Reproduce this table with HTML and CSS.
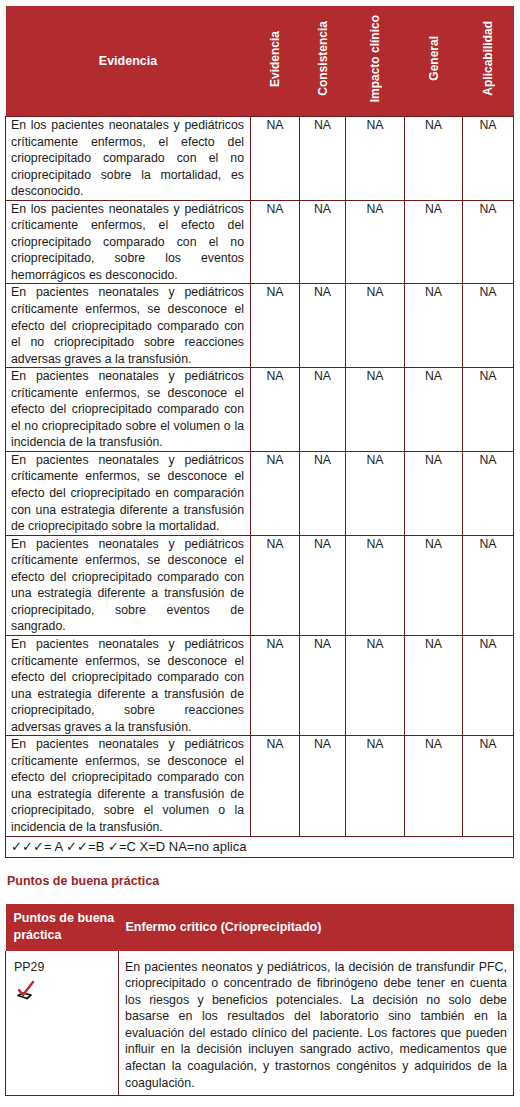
FILE: index.html
```html
<!DOCTYPE html>
<html lang="es">
<head>
<meta charset="utf-8">
<link rel="stylesheet" href="styles.css">
</head>
<body>
<div class="page">
  <table class="ev">
    <colgroup>
      <col class="c-main"><col class="c1"><col class="c2"><col class="c3"><col class="c4"><col class="c5">
    </colgroup>
    <thead>
      <tr>
        <th class="h-main">Evidencia</th>
        <th class="h-vert"><span>Evidencia</span></th>
        <th class="h-vert"><span>Consistencia</span></th>
        <th class="h-vert"><span>Impacto clínico</span></th>
        <th class="h-vert"><span>General</span></th>
        <th class="h-vert"><span>Aplicabilidad</span></th>
      </tr>
    </thead>
    <tbody>
      <tr>
        <td class="txt">En los pacientes neonatales y pediátricos críticamente enfermos, el efecto del crioprecipitado comparado con el no crioprecipitado sobre la mortalidad, es desconocido.</td>
        <td class="na">NA</td><td class="na">NA</td><td class="na">NA</td><td class="na">NA</td><td class="na">NA</td>
      </tr>
      <tr>
        <td class="txt">En los pacientes neonatales y pediátricos críticamente enfermos, el efecto del crioprecipitado comparado con el no crioprecipitado, sobre los eventos hemorrágicos es desconocido.</td>
        <td class="na">NA</td><td class="na">NA</td><td class="na">NA</td><td class="na">NA</td><td class="na">NA</td>
      </tr>
      <tr>
        <td class="txt">En pacientes neonatales y pediátricos críticamente enfermos, se desconoce el efecto del crioprecipitado comparado con el no crioprecipitado sobre reacciones adversas graves a la transfusión.</td>
        <td class="na">NA</td><td class="na">NA</td><td class="na">NA</td><td class="na">NA</td><td class="na">NA</td>
      </tr>
      <tr>
        <td class="txt">En pacientes neonatales y pediátricos críticamente enfermos, se desconoce el efecto del crioprecipitado comparado con el no crioprecipitado sobre el volumen o la incidencia de la transfusión.</td>
        <td class="na">NA</td><td class="na">NA</td><td class="na">NA</td><td class="na">NA</td><td class="na">NA</td>
      </tr>
      <tr>
        <td class="txt">En pacientes neonatales y pediátricos críticamente enfermos, se desconoce el efecto del crioprecipitado en comparación con una estrategia diferente a transfusión de crioprecipitado sobre la mortalidad.</td>
        <td class="na">NA</td><td class="na">NA</td><td class="na">NA</td><td class="na">NA</td><td class="na">NA</td>
      </tr>
      <tr>
        <td class="txt">En pacientes neonatales y pediátricos críticamente enfermos, se desconoce el efecto del crioprecipitado comparado con una estrategia diferente a transfusión de crioprecipitado, sobre eventos de sangrado.</td>
        <td class="na">NA</td><td class="na">NA</td><td class="na">NA</td><td class="na">NA</td><td class="na">NA</td>
      </tr>
      <tr>
        <td class="txt">En pacientes neonatales y pediátricos críticamente enfermos, se desconoce el efecto del crioprecipitado comparado con una estrategia diferente a transfusión de crioprecipitado, sobre reacciones adversas graves a la transfusión.</td>
        <td class="na">NA</td><td class="na">NA</td><td class="na">NA</td><td class="na">NA</td><td class="na">NA</td>
      </tr>
      <tr>
        <td class="txt">En pacientes neonatales y pediátricos críticamente enfermos, se desconoce el efecto del crioprecipitado comparado con una estrategia diferente a transfusión de crioprecipitado, sobre el volumen o la incidencia de la transfusión.</td>
        <td class="na">NA</td><td class="na">NA</td><td class="na">NA</td><td class="na">NA</td><td class="na">NA</td>
      </tr>
      <tr>
        <td class="legend" colspan="6">✓✓✓= A ✓✓=B ✓=C X=D NA=no aplica</td>
      </tr>
    </tbody>
  </table>

  <h2 class="section-title">Puntos de buena práctica</h2>

  <table class="pbp">
    <colgroup><col class="p-c1"><col class="p-c2"></colgroup>
    <thead>
      <tr>
        <th class="p-h1">Puntos de buena práctica</th>
        <th class="p-h2">Enfermo critico (Crioprecipitado)</th>
      </tr>
    </thead>
    <tbody>
      <tr>
        <td class="p-code">
          <div>PP29</div>
          <svg class="pp-icon" width="22" height="22" viewBox="0 0 22 22">
            <path d="M3 16.5 L8 14 L16 16 L12 19.5 Z" fill="none" stroke="#111" stroke-width="1.8" stroke-linejoin="round"/>
            <path d="M4 11 L8 16 L18 3" fill="none" stroke="#b52a30" stroke-width="2.4" stroke-linecap="round" stroke-linejoin="round"/>
          </svg>
        </td>
        <td class="p-text">En pacientes neonatos y pediátricos, la decisión de transfundir PFC, crioprecipitado o concentrado de fibrinógeno debe tener en cuenta los riesgos y beneficios potenciales. La decisión no solo debe basarse en los resultados del laboratorio sino también en la evaluación del estado clínico del paciente. Los factores que pueden influir en la decisión incluyen sangrado activo, medicamentos que afectan la coagulación, y trastornos congénitos y adquiridos de la coagulación.</td>
      </tr>
    </tbody>
  </table>
</div>
</body>
</html>
```

FILE: styles.css
```css
html, body {
  margin: 0;
  padding: 0;
  background: #ffffff;
}

.page {
  padding: 6px 7px 0 5px;
  font-family: "Liberation Sans", Arial, sans-serif;
  color: #1c1c1c;
}

.ev {
  width: 508px;
  border-collapse: collapse;
  table-layout: fixed;
  font-size: 12.3px;
  line-height: 16.55px;
}

.c-main { width: 245px; }
.c1 { width: 49px; }
.c2 { width: 46px; }
.c3 { width: 59px; }
.c4 { width: 58px; }
.c5 { width: 51px; }

.ev thead th {
  background: #b22b2f;
  color: #ffffff;
  font-weight: bold;
  height: 110px;
  padding: 0;
  border: none;
}

.h-main {
  font-size: 12.5px;
  text-align: center;
  vertical-align: middle;
}

.h-vert {
  font-size: 12px;
  vertical-align: middle;
  text-align: center;
}

.h-vert span {
  display: inline-block;
  writing-mode: vertical-rl;
  transform: rotate(180deg);
  white-space: nowrap;
  line-height: 14px;
}

.ev tbody td {
  border: 1.5px solid #6d1a1c;
  vertical-align: top;
}

.txt {
  text-align: justify;
  padding: 0 6px 0 5px;
}

.na {
  text-align: center;
  padding: 0;
}

.legend {
  padding: 1px 5px 1px 5px;
  line-height: 18px;
  font-size: 13px;
}

.section-title {
  margin: 15px 0 0 2px;
  font-size: 12.5px;
  line-height: 16px;
  font-weight: bold;
  color: #9b2629;
}

.pbp {
  margin-top: 15px;
  width: 508px;
  border-collapse: collapse;
  table-layout: fixed;
  font-size: 12.4px;
  line-height: 16.6px;
}

.p-c1 { width: 113px; }
.p-c2 { width: 395px; }

.pbp thead th {
  background: #b22b2f;
  color: #ffffff;
  font-weight: bold;
  text-align: left;
  vertical-align: middle;
  height: 47px;
  font-size: 12.5px;
  line-height: 17px;
  padding-top: 0;
  padding-bottom: 0;
}

.p-h1 {
  padding-left: 8px;
  padding-right: 4px;
}

.p-h2 {
  padding-left: 7px;
  padding-right: 6px;
}

.pbp tbody td {
  border: 1.5px solid #6d1a1c;
  border-top: none;
  vertical-align: top;
}

.p-code {
  padding: 8px 4px 4px 8px;
}

.pp-icon {
  display: block;
  margin: 4px 0 0 1px;
}

.p-text {
  padding: 8px 6px 4px 6px;
  text-align: justify;
}
```
